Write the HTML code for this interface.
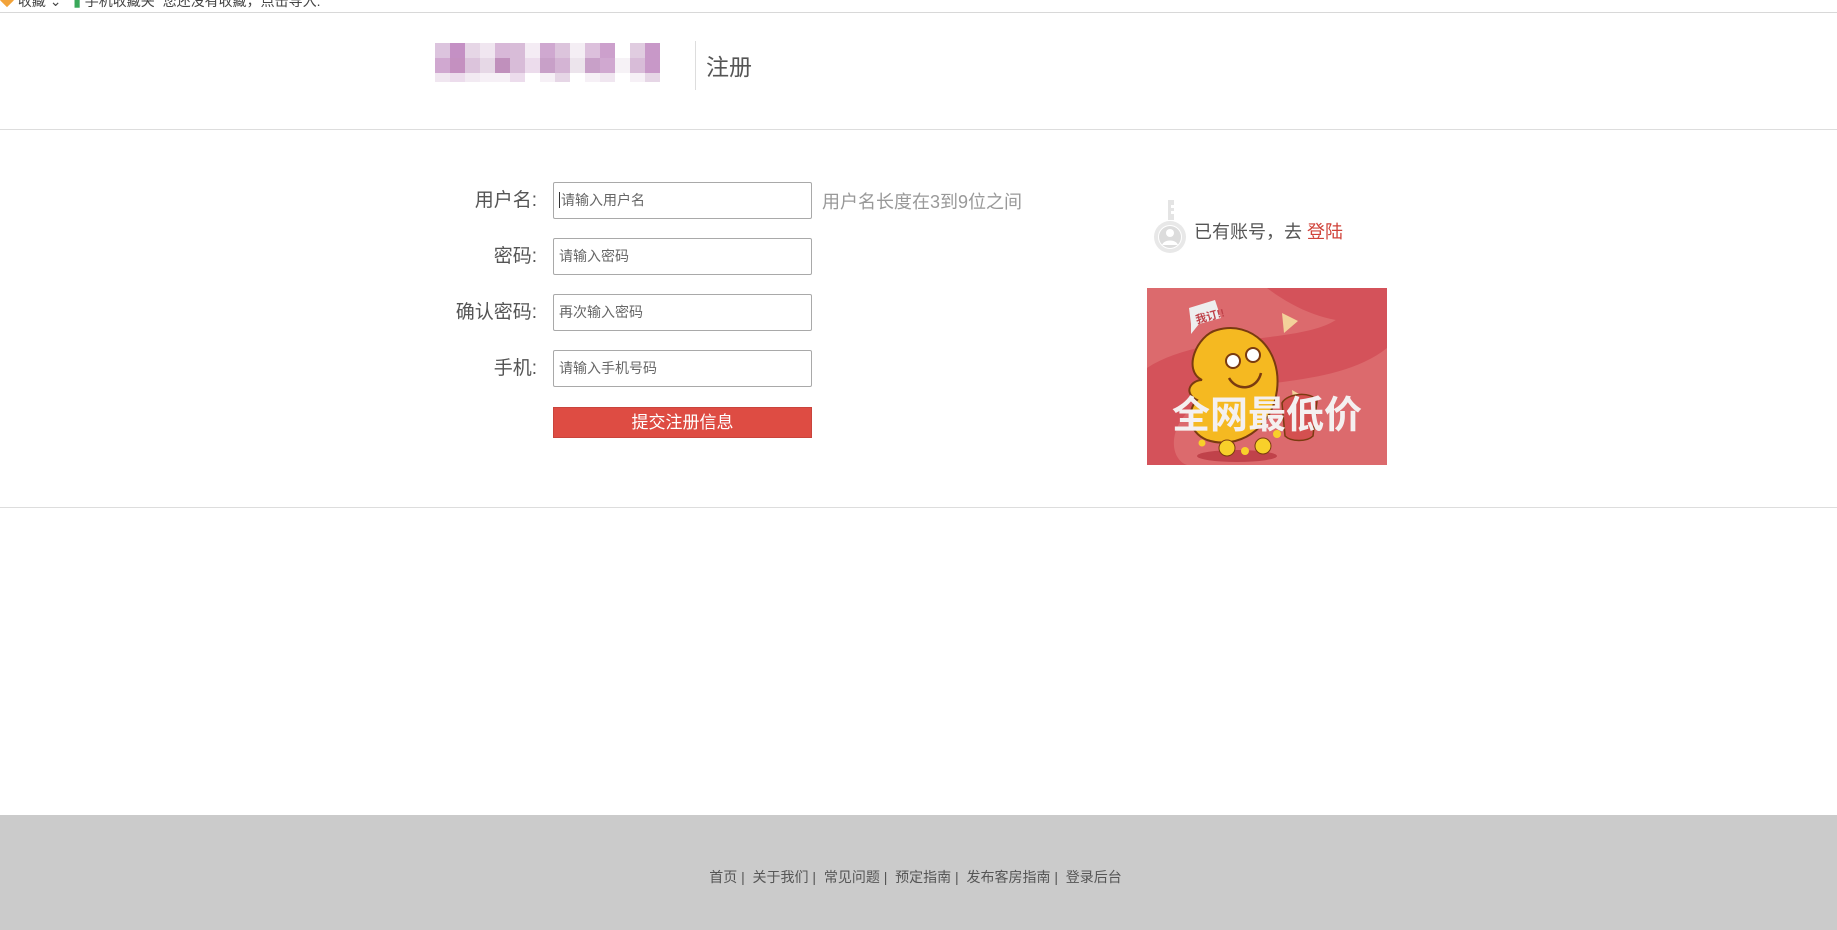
<!DOCTYPE html>
<html><head><meta charset="utf-8"><style>
*{margin:0;padding:0;box-sizing:border-box}
body{width:1837px;height:930px;position:relative;background:#fff;font-family:"Liberation Sans","Microsoft YaHei","Noto Sans CJK SC",sans-serif;overflow:hidden;color:#555}
.a{position:absolute}
.lbl{position:absolute;right:1300px;font-size:19px;color:#555;line-height:37px;white-space:nowrap}
.inp{position:absolute;left:553px;width:259px;height:37px;border:1px solid #a9a9a9;border-radius:2px;font-size:14px;color:#666;line-height:35px;padding-left:5px}
.blk{position:absolute;width:15px;height:15px}
</style></head><body>
<div class="a" style="left:0;top:-9px;font-size:14px;color:#444;white-space:nowrap"><span style="color:#f2a33a">◆</span> 收藏 ⌄ &nbsp; <span style="color:#3aa85a">▮</span> 手机收藏夹 &nbsp;您还没有收藏，点击导入.</div>
<div class="a" style="left:0;top:12px;width:1837px;height:1px;background:#d8d8d8"></div>

<div class="a" style="left:435px;top:40px;width:226px;height:45px" id="logo"></div>
<div class="a" style="left:695px;top:41px;width:1px;height:49px;background:#ddd"></div>
<div class="a" style="left:706px;top:48px;font-size:23px;color:#555">注册</div>
<div class="a" style="left:0;top:129px;width:1837px;height:1px;background:#ddd"></div>

<div class="lbl" style="top:182px">用户名:</div>
<div class="inp" style="top:182px"><span style="border-left:1px solid #333;padding-left:1px">请输入用户名</span></div>
<div class="a" style="left:822px;top:188px;font-size:18px;color:#999;white-space:nowrap">用户名长度在3到9位之间</div>
<div class="lbl" style="top:238px">密码:</div>
<div class="inp" style="top:238px">请输入密码</div>
<div class="lbl" style="top:294px">确认密码:</div>
<div class="inp" style="top:294px">再次输入密码</div>
<div class="lbl" style="top:350px">手机:</div>
<div class="inp" style="top:350px">请输入手机号码</div>
<div class="a" style="left:553px;top:407px;width:259px;height:31px;background:#de4c43;border:1px solid #c9443c;color:#fff;font-size:17px;text-align:center;line-height:29px">提交注册信息</div>

<svg class="a" style="left:1152px;top:197px" width="40" height="58" viewBox="0 0 40 58">
<path d="M16 3h6v5h-3v3h3v3h-3v3h3v6h-6z" fill="#e4e4e4"/>
<circle cx="18" cy="40" r="16" fill="#e8e8e8"/><circle cx="18" cy="40" r="12" fill="#fff"/>
<circle cx="18" cy="40" r="11" fill="#dcdcdc"/><circle cx="18" cy="36" r="4" fill="#fff"/><path d="M10 48c2-6 14-6 16 0z" fill="#fff"/>
</svg>
<div class="a" style="left:1194px;top:218px;font-size:18px;color:#555;white-space:nowrap">已有账号，去 <span style="color:#d0433a">登陆</span></div>

<svg class="a" style="left:1147px;top:288px" width="240" height="177" viewBox="0 0 240 177">
<rect width="240" height="177" fill="#dc6a6d"/>
<path d="M0 80C60 40 180 60 200 20L240 0V60C190 100 100 90 60 110S20 170 40 177H0z" fill="#d4525a"/>
<path d="M120 0h120v30c-40 10-80 0-120-30z" fill="#d4525a"/>
<ellipse cx="90" cy="168" rx="40" ry="6" fill="#c0424a"/>
<path d="M42 20l26-8 6 18-22 6-8 10 0-10z" fill="#eee"/>
<text x="48" y="34" font-size="11" fill="#c0424a" font-weight="bold" transform="rotate(-15 55 28)">我订!!</text>
<path d="M70 42c35-10 65 20 60 60s-40 60-70 50c-20-8-20-30-10-40-15-8-5-20 5-20-20-10-5-45 15-50z" fill="#f5b921" stroke="#7a3b10" stroke-width="2"/>
<circle cx="86" cy="73" r="7" fill="#fff" stroke="#7a3b10" stroke-width="2"/><circle cx="106" cy="67" r="7" fill="#fff" stroke="#7a3b10" stroke-width="2"/>
<path d="M82 90c8 14 28 12 32-5" fill="none" stroke="#7a3b10" stroke-width="2.5"/>
<path d="M135 25l16 8-14 12z" fill="#f3d29a"/><path d="M145 102l14 8-12 10z" fill="#f3d29a"/>
<path d="M135 115c5-10 30-12 35-2l-4 35c-6 6-22 6-28 0z" fill="#d45050" stroke="#7a3b10" stroke-width="1.5"/>
<circle cx="55" cy="155" r="3.5" fill="#f8d02a"/><circle cx="80" cy="160" r="8" fill="#f8d02a" stroke="#7a3b10"/><circle cx="98" cy="163" r="4" fill="#f8d02a"/><circle cx="116" cy="158" r="8" fill="#f8d02a" stroke="#7a3b10"/><circle cx="130" cy="146" r="4" fill="#f8d02a"/>
<text x="120" y="140" text-anchor="middle" font-size="38" font-weight="bold" fill="#f4f0f0" font-family="Liberation Sans,Noto Sans CJK SC,sans-serif">全网最低价</text>
</svg>

<div class="a" style="left:0;top:507px;width:1837px;height:1px;background:#ddd"></div>
<div class="a" style="left:0;top:815px;width:1837px;height:115px;background:#cbcbcb"></div>
<div class="a" style="left:0;top:867px;width:1837px;text-align:center;font-size:14px;color:#555;padding-right:6px">首页 | &nbsp;关于我们 | &nbsp;常见问题 | &nbsp;预定指南 | &nbsp;发布客房指南 | &nbsp;登录后台</div>

<script>
var r1=["#dcc4de","#c490c4","#e6d6e6","#f0e6f0","#d8b8d8","#d8bcd8","#f4ecf4","#cfa8d0","#dcc4dc","#f4eef4","#dcc0dc","#cca0cc","#fff","#e0cce0","#c898c8"];
var r2=["#d0a8d0","#c490c0","#dcc4dc","#e6d8e6","#c090bc","#d8bcd8","#ecdcec","#c8a0c8","#d4b4d4","#ece4ec","#c8a0c8","#d0a8d0","#f6f2f6","#d8bcd8","#c898c8"];
var r3=["#f0e6f0","#ecdcec","#f2eaf2","#f6f0f6","#f6f0f6","#ecdcec","#fff","#f6f0f6","#e6d6e6","#fff","#f6f0f6","#f0e6f0","#fff","#f6f0f6","#e6d6e6"];
var L=document.getElementById('logo'),h='';
[r1,r2,r3].forEach(function(r,j){r.forEach(function(c,i){h+='<div class="blk" style="left:'+(i*15)+'px;top:'+(3+j*15)+'px;background:'+c+';height:'+(j==2?9:15)+'px"></div>'})});
L.innerHTML=h;
</script>
</body></html>
